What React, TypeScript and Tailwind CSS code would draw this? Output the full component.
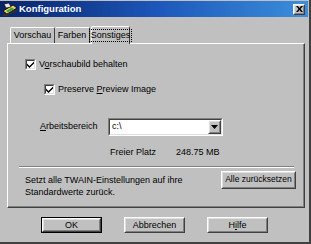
const font = { fontFamily: '"Liberation Sans", Arial, sans-serif' };

const Raised = ({ className = '', children }: { className?: string; children?: React.ReactNode }) => (
  <div className={`border border-t-white border-l-white border-r-[#404040] border-b-[#404040] ${className}`}>
    <div className="w-full h-full border border-t-[#dfdfdf] border-l-[#dfdfdf] border-r-[#808080] border-b-[#808080] flex items-center justify-center">
      {children}
    </div>
  </div>
);

const Check = () => (
  <div className="w-[11px] h-[11px] border border-t-[#808080] border-l-[#808080] border-r-white border-b-white shrink-0">
    <div className="w-full h-full bg-white border border-t-[#404040] border-l-[#404040] border-r-[#dfdfdf] border-b-[#dfdfdf] flex items-center justify-center">
      <svg width="7" height="7" viewBox="0 0 7 7">
        <path d="M0 2.5 L2.5 5 L7 0.5 L7 2.5 L2.5 7 L0 4.5 Z" fill="#000" />
      </svg>
    </div>
  </div>
);

const Btn = ({ label, u, def = false, className = '', size = 'text-[9px]' }: { label: string; u?: number; def?: boolean; className?: string; size?: string }) => {
  const text =
    u === undefined ? (
      label
    ) : (
      <>
        {label.slice(0, u)}
        <span className="underline">{label[u]}</span>
        {label.slice(u + 1)}
      </>
    );
  if (def) {
    return (
      <div className={`border border-black ${className}`}>
        <Raised className="w-full h-full">
          <span className={`${size} text-black leading-none whitespace-nowrap`}>{text}</span>
        </Raised>
      </div>
    );
  }
  return (
    <Raised className={className}>
      <span className={`${size} text-black leading-none whitespace-nowrap`}>{text}</span>
    </Raised>
  );
};

export default function App() {
  return (
    <div style={font} className="w-[311px] h-[244px] bg-[#c0c0c0] overflow-hidden border-r-2 border-b-2 border-r-[#404040] border-b-[#404040] flex flex-col">
      {/* title bar */}
      <div className="h-[16px] mt-[1px] mr-[1px] flex items-center bg-gradient-to-r from-[#0a246a] via-[#1c56b8] to-[#3c8edc]">
        <svg width="16" height="14" viewBox="0 0 16 14" className="ml-[2px]">
          <path d="M1 9 L11 3 L15 6 L5 12 Z" fill="#f0d060" stroke="#000" strokeWidth="0.8" />
          <path d="M4 9 L10 5.5 L12 7 L6 10.5 Z" fill="#40a040" />
          <path d="M2 2 L7 1 L9 5 L4 6 Z" fill="#e8e8e8" stroke="#000" strokeWidth="0.6" />
          <path d="M1 12 L5 12 L15 7 L15 9 L5 14 L1 14 Z" fill="#303030" />
        </svg>
        <span className="ml-[1px] text-white font-bold text-[9.5px] leading-none">Konfiguration</span>
        <div className="ml-auto mr-[3px]">
          <Raised className="w-[12px] h-[11px] bg-[#c0c0c0]">
            <svg width="7" height="6" viewBox="0 0 7 6">
              <path d="M0 0 L2 0 L3.5 2 L5 0 L7 0 L4.5 3 L7 6 L5 6 L3.5 4 L2 6 L0 6 L2.5 3 Z" fill="#000" />
            </svg>
          </Raised>
        </div>
      </div>

      {/* tabs */}
      <div className="ml-[7px] mt-[7px] h-[19px] flex items-end">
        <div className="h-[16px] w-[45px] ml-[3px] border-t border-l border-r border-t-white border-l-white border-r-[#404040] rounded-t-[2px] flex items-center justify-center text-[9px] text-black">
          Vorschau
        </div>
        <div className="h-[16px] w-[35px] border-t border-r border-t-white border-r-[#404040] rounded-t-[2px] flex items-center justify-center text-[9px] text-black">
          Farben
        </div>
        <div className="h-[18px] w-[39px] ml-[1px] -mb-[1px] bg-[#c0c0c0] relative z-10 border-t border-l border-r border-t-white border-l-white border-r-[#404040] rounded-t-[2px] flex items-center justify-center">
          <span className="text-[9px] text-black leading-none px-[1px] py-[1px] outline outline-1 outline-dotted outline-black">Sonstiges</span>
        </div>
      </div>

      {/* panel */}
      <div className="ml-[7px] w-[298px] h-[165px] border border-t-white border-l-white border-r-[#404040] border-b-[#404040]">
        <div className="w-full h-full border-r border-b border-r-[#808080] border-b-[#808080] flex flex-col text-[9px] text-black">
          <div className="mt-[14px] ml-[17px] flex items-center gap-[3px]">
            <Check />
            <span>
              V<span className="underline">o</span>rschaubild behalten
            </span>
          </div>
          <div className="mt-[11px] ml-[36px] flex items-center gap-[3px]">
            <Check />
            <span>
              Preserve <span className="underline">P</span>review Image
            </span>
          </div>

          <div className="mt-[22px] ml-[32px] flex items-center">
            <span className="w-[68px]">
              <span className="underline">A</span>rbeitsbereich
            </span>
            <div className="w-[115px] h-[18px] border border-t-[#808080] border-l-[#808080] border-r-white border-b-white">
              <div className="w-full h-full bg-white border border-t-[#404040] border-l-[#404040] border-r-[#dfdfdf] border-b-[#dfdfdf] flex items-center">
                <span className="ml-[2px]">c:\</span>
                <Raised className="ml-auto w-[13px] h-[14px] bg-[#c0c0c0]">
                  <svg width="7" height="4" viewBox="0 0 7 4">
                    <path d="M0 0 L7 0 L3.5 4 Z" fill="#000" />
                  </svg>
                </Raised>
              </div>
            </div>
          </div>

          <div className="mt-[10px] ml-[102px] flex items-center">
            <span className="w-[66px]">Freier Platz</span>
            <span>248.75 MB</span>
          </div>

          <div className="mt-[6px] ml-[11px] w-[275px] border-t border-b border-t-[#808080] border-b-white" />

          <div className="mt-[3px] ml-[17px] mr-[7px] flex items-start">
            <div className="leading-[12px] mt-[3px]">
              <div>Setzt alle TWAIN-Einstellungen auf ihre</div>
              <div>Standardwerte zurück.</div>
            </div>
            <Btn label="Alle zurücksetzen" size="text-[8.5px]" className="ml-auto w-[75px] h-[18px]" />
          </div>
        </div>
      </div>

      {/* bottom buttons */}
      <div className="mt-[9px] ml-[41px] flex gap-[22px]">
        <Btn label="OK" def className="w-[61px] h-[16px]" />
        <Btn label="Abbrechen" className="w-[61px] h-[16px]" />
        <Btn label="Hilfe" u={1} className="w-[61px] h-[16px]" />
      </div>
    </div>
  );
}
